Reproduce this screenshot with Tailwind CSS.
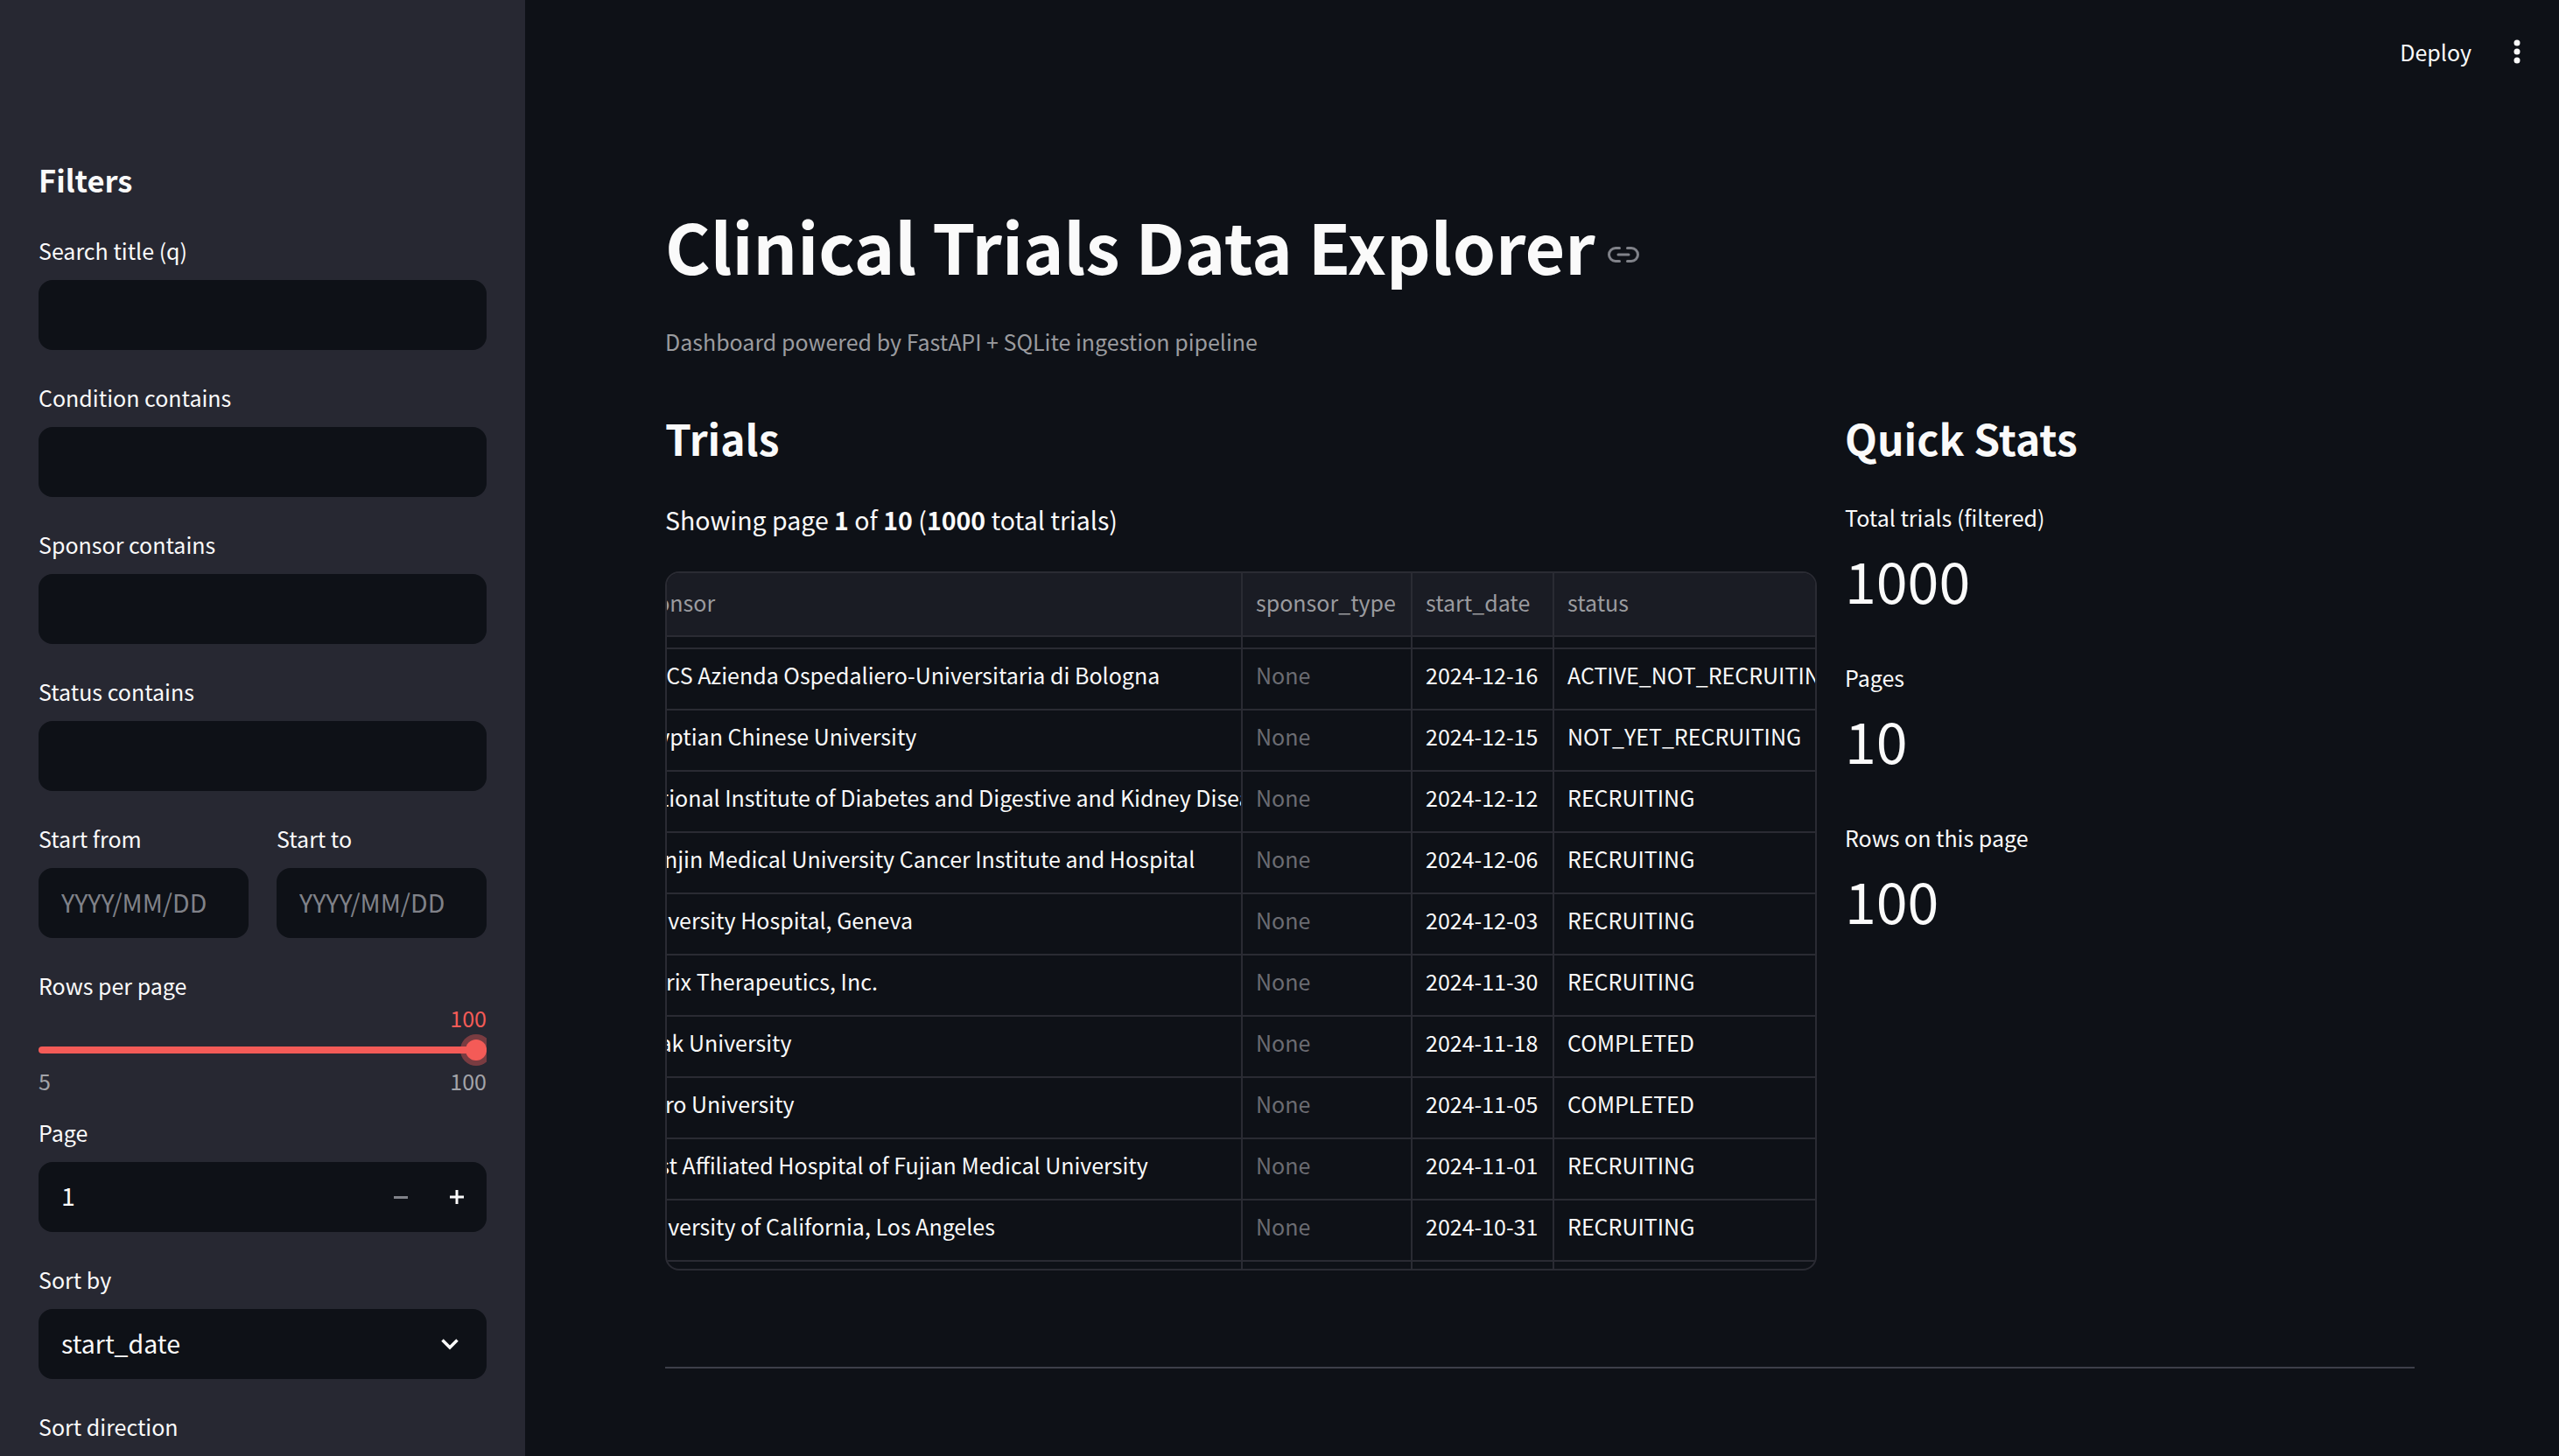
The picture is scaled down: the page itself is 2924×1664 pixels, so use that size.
<!DOCTYPE html>
<html lang="en">
<head>
  <meta charset="UTF-8" />
  <meta name="viewport" content="width=device-width, initial-scale=1.0" />
  <title>Clinical Trials Data Explorer</title>
  <script src="https://cdn.jsdelivr.net/npm/@tailwindcss/browser@4"></script>
</head>
<body class="h-[1664px] overflow-hidden bg-[#0e1117] text-[#fafafa] font-['Noto_Sans_CJK_SC','Source_Sans_Pro',sans-serif]">
<div class="flex h-[1664px] overflow-hidden">

  <!-- Sidebar -->
  <aside class="w-[600px] shrink-0 bg-[#272832] px-[44px] pt-[180px] text-[25px] leading-[30px]">
    <h2 class="mb-[42px] text-[34.5px] leading-[50px] font-bold">Filters</h2>

    <div class="flex flex-col gap-[40px]">
      <div class="h-[128px]">
        <label class="block h-[48px] -translate-y-[1px]">Search title (q)</label>
        <input class="block h-[80px] w-full rounded-[16px] bg-[#0e1117] px-[26px] pb-[3px] text-[28.5px] outline-none" />
      </div>
      <div class="h-[128px]">
        <label class="block h-[48px] -translate-y-[1px]">Condition contains</label>
        <input class="block h-[80px] w-full rounded-[16px] bg-[#0e1117] px-[26px] pb-[3px] text-[28.5px] outline-none" />
      </div>
      <div class="h-[128px]">
        <label class="block h-[48px] -translate-y-[1px]">Sponsor contains</label>
        <input class="block h-[80px] w-full rounded-[16px] bg-[#0e1117] px-[26px] pb-[3px] text-[28.5px] outline-none" />
      </div>
      <div class="h-[128px]">
        <label class="block h-[48px] -translate-y-[1px]">Status contains</label>
        <input class="block h-[80px] w-full rounded-[16px] bg-[#0e1117] px-[26px] pb-[3px] text-[28.5px] outline-none" />
      </div>

      <div class="flex h-[128px] gap-[32px]">
        <div class="flex-1">
          <label class="block h-[48px] -translate-y-[1px]">Start from</label>
          <input placeholder="YYYY/MM/DD" class="block h-[80px] w-full rounded-[16px] bg-[#0e1117] px-[26px] pb-[3px] text-[28.5px] outline-none placeholder:text-[#808289]" />
        </div>
        <div class="flex-1">
          <label class="block h-[48px] -translate-y-[1px]">Start to</label>
          <input placeholder="YYYY/MM/DD" class="block h-[80px] w-full rounded-[16px] bg-[#0e1117] px-[26px] pb-[3px] text-[28.5px] outline-none placeholder:text-[#808289]" />
        </div>
      </div>

      <!-- Rows per page slider -->
      <div class="h-[128px]">
        <label class="block h-[37px] -translate-y-[1px]">Rows per page</label>
        <div class="text-right leading-[28px] text-[#f45b57]">100</div>
        <div class="relative mt-[5px] h-[36px] overflow-hidden">
          <div class="absolute left-0 right-0 top-[14px] h-[8px] rounded-full bg-[#f45b57]"></div>
          <div class="absolute right-[-6px] top-0 h-[36px] w-[36px] rounded-full bg-[#f45b57]/40"></div>
          <div class="absolute right-0 top-[6px] h-[24px] w-[24px] rounded-full bg-[#f45b57]"></div>
        </div>
        <div class="mt-[2px] flex justify-between leading-[30px] text-[#a3a4a9]">
          <span>5</span>
          <span>100</span>
        </div>
      </div>

      <div class="h-[128px]">
        <label class="block h-[48px] -translate-y-[1px]">Page</label>
        <div class="flex h-[80px] items-center rounded-[16px] bg-[#0e1117] pl-[26px] text-[28.5px]">
          <span class="flex-1 pb-[4px]">1</span>
          <span class="mr-[48px] h-[3px] w-[16px] bg-[#808289]"></span>
          <svg class="mr-[26px] h-[16px] w-[16px]" viewBox="0 0 16 16"><path d="M8 0v16M0 8h16" stroke="#fafafa" stroke-width="3" /></svg>
        </div>
      </div>

      <div class="h-[128px]">
        <label class="block h-[48px] -translate-y-[1px]">Sort by</label>
        <div class="flex h-[80px] items-center justify-between rounded-[16px] bg-[#0e1117] pl-[26px] pr-[32px] text-[28.5px]">
          <span class="pb-[3px]">start_date</span>
          <svg class="h-[14px] w-[20px]" viewBox="0 0 20 14" fill="none"><path d="M1.500 2.500l8.500 8.500 8.500-8.500" stroke="#fafafa" stroke-width="3.500" /></svg>
        </div>
      </div>

      <div class="h-[128px]">
        <label class="block h-[48px] -translate-y-[1px]">Sort direction</label>
      </div>
    </div>
  </aside>

  <!-- Main -->
  <main class="relative min-w-0 flex-1 pl-[160px] pr-[165px] pt-[230px]">
    <header class="absolute right-[36px] top-[43px] flex items-center gap-[40px]">
      <span class="text-[25px] leading-[30px]">Deploy</span>
      <svg class="h-[32px] w-[24px]" viewBox="0 0 24 32"><circle cx="12" cy="6" r="3.5" fill="#fafafa" /><circle cx="12" cy="16" r="3.5" fill="#fafafa" /><circle cx="12" cy="26" r="3.5" fill="#fafafa" /></svg>
    </header>

    <h1 class="flex items-center text-[78.9px] leading-[100px] font-bold">
      Clinical Trials Data Explorer
      <svg class="ml-[14px] mt-[22px] h-[36px] w-[36px]" viewBox="0 0 24 24" fill="none" stroke="#808289" stroke-width="2" stroke-linecap="round" stroke-linejoin="round"><path d="M15 7h3a5 5 0 0 1 0 10h-3m-6 0H6A5 5 0 0 1 6 7h3" /><path d="M8 12h8" /></svg>
    </h1>
    <p class="mt-[42px] text-[25px] leading-[36px] text-[#9a9b9f]">Dashboard powered by FastAPI + SQLite ingestion pipeline</p>

    <div class="mt-[57px] flex gap-[32px]">
      <!-- Trials table -->
      <section class="w-[1316px] shrink-0">
        <h3 class="text-[48px] leading-[70px] font-bold">Trials</h3>
        <p class="mt-[37px] text-[28.5px] leading-[44px]">Showing page <b>1</b> of <b>10</b> (<b>1000</b> total trials)</p>

        <div class="mt-[37px] flex h-[799px] flex-col overflow-hidden rounded-[16px] border-2 border-[#2a2b33] text-[25px] leading-[36px] [&>div>div]:pb-[11px]">
          <div class="flex h-[73px] shrink-0 border-b-2 border-[#2a2b33] bg-[#1a1c24] text-[#9a9b9f]">
            <div class="flex w-[658px] shrink-0 items-center overflow-hidden border-r-2 border-[#2a2b33] pb-[5px]!"><span class="ml-[-39px]">sponsor</span></div>
            <div class="flex w-[194px] shrink-0 items-center border-r-2 border-[#2a2b33] pl-[15px] pb-[5px]!">sponsor_type</div>
            <div class="flex w-[162px] shrink-0 items-center border-r-2 border-[#2a2b33] pl-[15px] pb-[5px]!">start_date</div>
            <div class="flex flex-1 items-center pl-[15px] pb-[5px]!">status</div>
          </div>
          <div class="flex h-[14px] shrink-0 border-b-2 border-[#2a2b33]">
            <div class="w-[658px] shrink-0 border-r-2 border-[#2a2b33]"></div>
            <div class="w-[194px] shrink-0 border-r-2 border-[#2a2b33]"></div>
            <div class="w-[162px] shrink-0 border-r-2 border-[#2a2b33]"></div>
          </div>

          <div class="flex h-[70px] shrink-0 items-stretch border-b-2 border-[#2a2b33]">
            <div class="flex w-[658px] shrink-0 items-center overflow-hidden whitespace-nowrap border-r-2 border-[#2a2b33]"><span class="ml-[-39px]">IRCCS Azienda Ospedaliero-Universitaria di Bologna</span></div>
            <div class="flex w-[194px] shrink-0 items-center border-r-2 border-[#2a2b33] pl-[15px] text-[#6b6c72]">None</div>
            <div class="flex w-[162px] shrink-0 items-center border-r-2 border-[#2a2b33] pl-[15px]">2024-12-16</div>
            <div class="flex min-w-0 flex-1 items-center overflow-hidden whitespace-nowrap pl-[15px]">ACTIVE_NOT_RECRUITING</div>
          </div>
          <div class="flex h-[70px] shrink-0 items-stretch border-b-2 border-[#2a2b33]">
            <div class="flex w-[658px] shrink-0 items-center overflow-hidden whitespace-nowrap border-r-2 border-[#2a2b33]"><span class="ml-[-39px]">Egyptian Chinese University</span></div>
            <div class="flex w-[194px] shrink-0 items-center border-r-2 border-[#2a2b33] pl-[15px] text-[#6b6c72]">None</div>
            <div class="flex w-[162px] shrink-0 items-center border-r-2 border-[#2a2b33] pl-[15px]">2024-12-15</div>
            <div class="flex min-w-0 flex-1 items-center overflow-hidden whitespace-nowrap pl-[15px]">NOT_YET_RECRUITING</div>
          </div>
          <div class="flex h-[70px] shrink-0 items-stretch border-b-2 border-[#2a2b33]">
            <div class="flex w-[658px] shrink-0 items-center overflow-hidden whitespace-nowrap border-r-2 border-[#2a2b33]"><span class="ml-[-39px]">National Institute of Diabetes and Digestive and Kidney Diseases</span></div>
            <div class="flex w-[194px] shrink-0 items-center border-r-2 border-[#2a2b33] pl-[15px] text-[#6b6c72]">None</div>
            <div class="flex w-[162px] shrink-0 items-center border-r-2 border-[#2a2b33] pl-[15px]">2024-12-12</div>
            <div class="flex min-w-0 flex-1 items-center overflow-hidden whitespace-nowrap pl-[15px]">RECRUITING</div>
          </div>
          <div class="flex h-[70px] shrink-0 items-stretch border-b-2 border-[#2a2b33]">
            <div class="flex w-[658px] shrink-0 items-center overflow-hidden whitespace-nowrap border-r-2 border-[#2a2b33]"><span class="ml-[-39px]">Tianjin Medical University Cancer Institute and Hospital</span></div>
            <div class="flex w-[194px] shrink-0 items-center border-r-2 border-[#2a2b33] pl-[15px] text-[#6b6c72]">None</div>
            <div class="flex w-[162px] shrink-0 items-center border-r-2 border-[#2a2b33] pl-[15px]">2024-12-06</div>
            <div class="flex min-w-0 flex-1 items-center overflow-hidden whitespace-nowrap pl-[15px]">RECRUITING</div>
          </div>
          <div class="flex h-[70px] shrink-0 items-stretch border-b-2 border-[#2a2b33]">
            <div class="flex w-[658px] shrink-0 items-center overflow-hidden whitespace-nowrap border-r-2 border-[#2a2b33]"><span class="ml-[-39px]">University Hospital, Geneva</span></div>
            <div class="flex w-[194px] shrink-0 items-center border-r-2 border-[#2a2b33] pl-[15px] text-[#6b6c72]">None</div>
            <div class="flex w-[162px] shrink-0 items-center border-r-2 border-[#2a2b33] pl-[15px]">2024-12-03</div>
            <div class="flex min-w-0 flex-1 items-center overflow-hidden whitespace-nowrap pl-[15px]">RECRUITING</div>
          </div>
          <div class="flex h-[70px] shrink-0 items-stretch border-b-2 border-[#2a2b33]">
            <div class="flex w-[658px] shrink-0 items-center overflow-hidden whitespace-nowrap border-r-2 border-[#2a2b33]"><span class="ml-[-39px]">Cytrix Therapeutics, Inc.</span></div>
            <div class="flex w-[194px] shrink-0 items-center border-r-2 border-[#2a2b33] pl-[15px] text-[#6b6c72]">None</div>
            <div class="flex w-[162px] shrink-0 items-center border-r-2 border-[#2a2b33] pl-[15px]">2024-11-30</div>
            <div class="flex min-w-0 flex-1 items-center overflow-hidden whitespace-nowrap pl-[15px]">RECRUITING</div>
          </div>
          <div class="flex h-[70px] shrink-0 items-stretch border-b-2 border-[#2a2b33]">
            <div class="flex w-[658px] shrink-0 items-center overflow-hidden whitespace-nowrap border-r-2 border-[#2a2b33]"><span class="ml-[-39px]">Uşak University</span></div>
            <div class="flex w-[194px] shrink-0 items-center border-r-2 border-[#2a2b33] pl-[15px] text-[#6b6c72]">None</div>
            <div class="flex w-[162px] shrink-0 items-center border-r-2 border-[#2a2b33] pl-[15px]">2024-11-18</div>
            <div class="flex min-w-0 flex-1 items-center overflow-hidden whitespace-nowrap pl-[15px]">COMPLETED</div>
          </div>
          <div class="flex h-[70px] shrink-0 items-stretch border-b-2 border-[#2a2b33]">
            <div class="flex w-[658px] shrink-0 items-center overflow-hidden whitespace-nowrap border-r-2 border-[#2a2b33]"><span class="ml-[-39px]">Cairo University</span></div>
            <div class="flex w-[194px] shrink-0 items-center border-r-2 border-[#2a2b33] pl-[15px] text-[#6b6c72]">None</div>
            <div class="flex w-[162px] shrink-0 items-center border-r-2 border-[#2a2b33] pl-[15px]">2024-11-05</div>
            <div class="flex min-w-0 flex-1 items-center overflow-hidden whitespace-nowrap pl-[15px]">COMPLETED</div>
          </div>
          <div class="flex h-[70px] shrink-0 items-stretch border-b-2 border-[#2a2b33]">
            <div class="flex w-[658px] shrink-0 items-center overflow-hidden whitespace-nowrap border-r-2 border-[#2a2b33]"><span class="ml-[-39px]">First Affiliated Hospital of Fujian Medical University</span></div>
            <div class="flex w-[194px] shrink-0 items-center border-r-2 border-[#2a2b33] pl-[15px] text-[#6b6c72]">None</div>
            <div class="flex w-[162px] shrink-0 items-center border-r-2 border-[#2a2b33] pl-[15px]">2024-11-01</div>
            <div class="flex min-w-0 flex-1 items-center overflow-hidden whitespace-nowrap pl-[15px]">RECRUITING</div>
          </div>
          <div class="flex h-[70px] shrink-0 items-stretch border-b-2 border-[#2a2b33]">
            <div class="flex w-[658px] shrink-0 items-center overflow-hidden whitespace-nowrap border-r-2 border-[#2a2b33]"><span class="ml-[-39px]">University of California, Los Angeles</span></div>
            <div class="flex w-[194px] shrink-0 items-center border-r-2 border-[#2a2b33] pl-[15px] text-[#6b6c72]">None</div>
            <div class="flex w-[162px] shrink-0 items-center border-r-2 border-[#2a2b33] pl-[15px]">2024-10-31</div>
            <div class="flex min-w-0 flex-1 items-center overflow-hidden whitespace-nowrap pl-[15px]">RECRUITING</div>
          </div>
          <div class="flex flex-1">
            <div class="w-[658px] shrink-0 border-r-2 border-[#2a2b33]"></div>
            <div class="w-[194px] shrink-0 border-r-2 border-[#2a2b33]"></div>
            <div class="w-[162px] shrink-0 border-r-2 border-[#2a2b33]"></div>
          </div>
        </div>
      </section>

      <!-- Quick stats -->
      <section class="flex-1">
        <h3 class="text-[48px] leading-[70px] font-bold">Quick Stats</h3>
        <div class="mt-[38px] h-[183px] text-[25px] leading-[36px]">
          <div>Total trials (filtered)</div>
          <div class="mt-[8px] text-[64.5px] leading-[90px]">1000</div>
        </div>
        <div class="h-[183px] text-[25px] leading-[36px]">
          <div>Pages</div>
          <div class="mt-[8px] text-[64.5px] leading-[90px]">10</div>
        </div>
        <div class="h-[183px] text-[25px] leading-[36px]">
          <div>Rows on this page</div>
          <div class="mt-[8px] text-[64.5px] leading-[90px]">100</div>
        </div>
      </section>
    </div>

    <hr class="mt-[110px] border-t-2 border-[#3d3f49]" />
  </main>
</div>
</body>
</html>
